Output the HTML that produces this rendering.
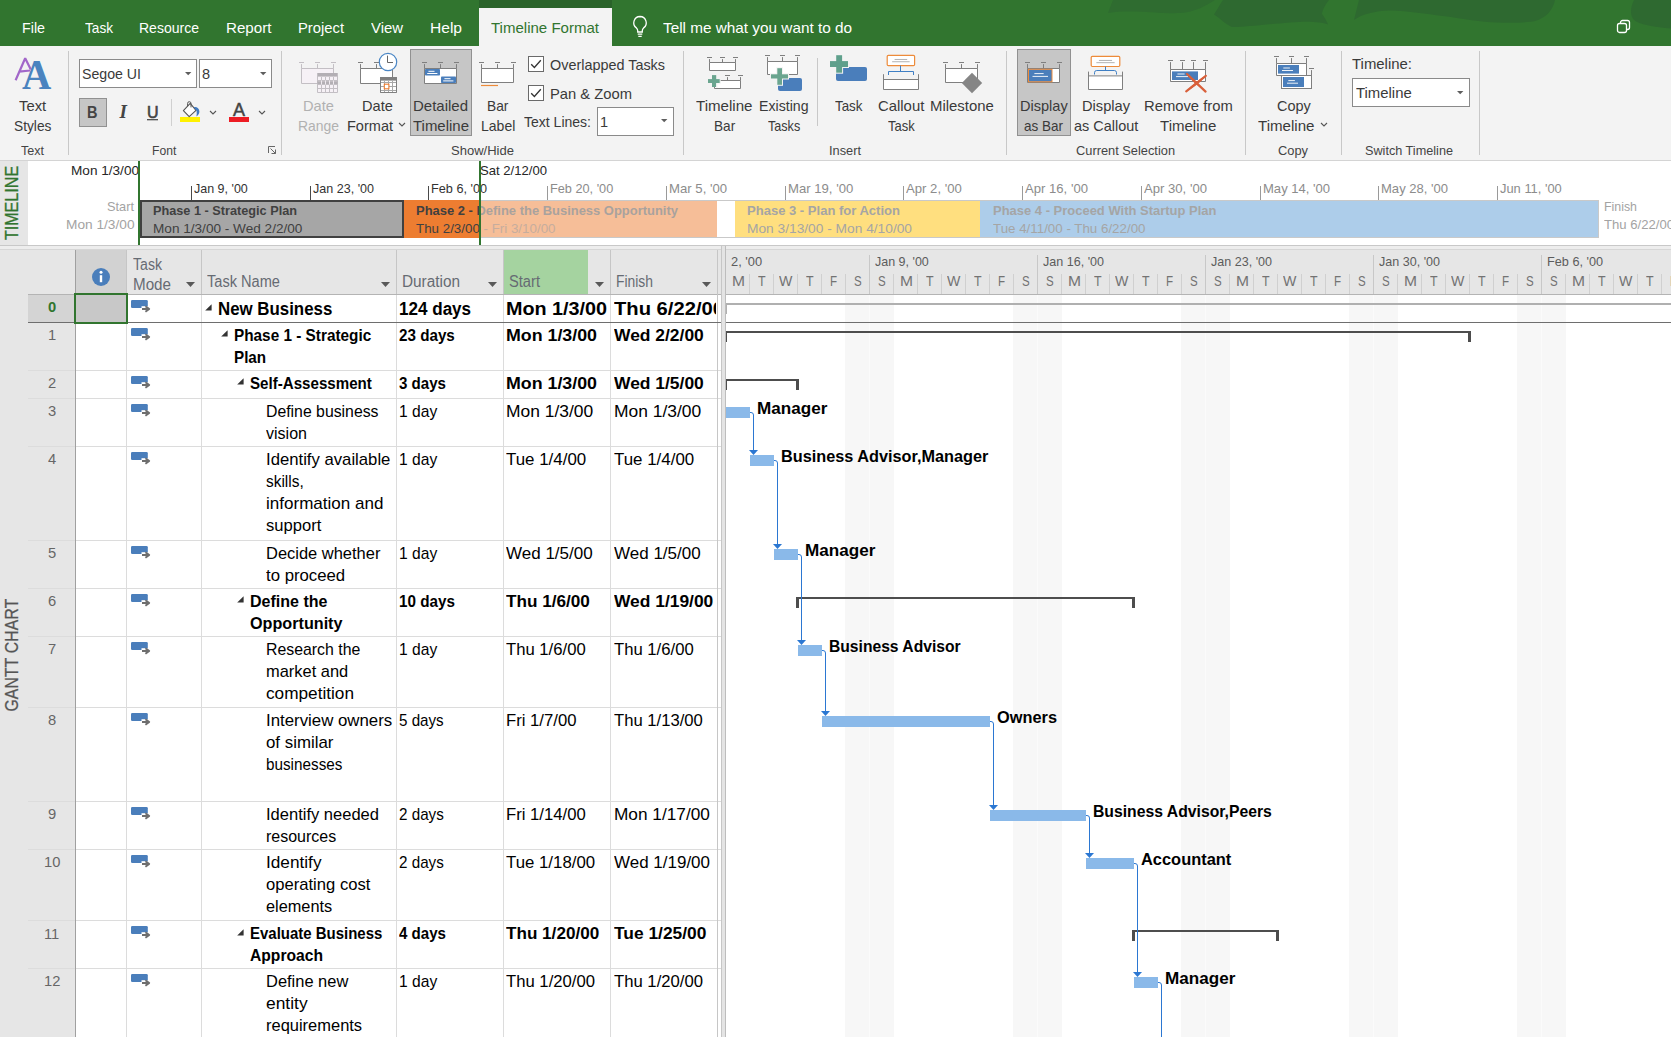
<!DOCTYPE html>
<html lang="en"><head><meta charset="utf-8"><title>Project - Timeline Format</title>
<style>
html,body{margin:0;padding:0;}
body{width:1671px;height:1037px;overflow:hidden;position:relative;background:#fff;font-family:"Liberation Sans", sans-serif;}
.b{position:absolute;display:block;}
.t{position:absolute;white-space:pre;transform-origin:0 50%;}
.rot{position:absolute;left:50%;top:50%;white-space:pre;line-height:1;transform:translate(-50%,-50%) rotate(-90deg);}
</style></head>
<body>
<div class="b " style="left:0px;top:0px;width:1671px;height:46px;background:#31752f;"></div>
<svg class="b" style="left:1100px;top:0px;" width="571" height="46" viewBox="1100 0 571 46">
<path d="M1108 13L1113 0L1215 0C1205 6 1195 12 1180 13C1160 14 1130 9 1108 13Z" fill="#2f6c30"/>
<path d="M1214 14.5C1218 8 1221 3 1223 0L1329 0C1324 6 1322 12 1322 14C1325 18 1327 22 1328 24.5C1320 22 1310 21 1290 22.5C1260 25 1240 27.5 1232 27C1225 24 1220 18 1214 14.5Z" fill="#2e6930"/>
<path d="M1359 0L1354 20C1362 14 1375 11 1390 10.5C1410 11 1425 14 1443 16C1465 19 1480 22 1497 22.5C1515 23 1528 22.5 1535 21C1546 18 1553 10 1555 0Z" fill="#2e6930"/>
<path d="M1634 0C1630 8 1630 16 1634 20C1640 25 1655 27 1671 28.5L1671 0Z" fill="#2e6930"/>
</svg>
<div class="b " style="left:479px;top:0px;width:133px;height:8px;background:#2a632a;"></div>
<div class="b " style="left:479px;top:8px;width:133px;height:38px;background:#f3f3f3;"></div>
<span class="t" style="transform:scaleX(0.9515);margin-left:0.00px;top:19px;font-size:15px;line-height:17px;color:#ffffff;left:22px;">File</span>
<span class="t" style="transform:scaleX(0.9078);margin-left:0.00px;top:19px;font-size:15px;line-height:17px;color:#ffffff;left:85px;">Task</span>
<span class="t" style="transform:scaleX(0.9345);margin-left:0.00px;top:19px;font-size:15px;line-height:17px;color:#ffffff;left:139px;">Resource</span>
<span class="t" style="transform:scaleX(1.0104);margin-left:0.00px;top:19px;font-size:15px;line-height:17px;color:#ffffff;left:226px;">Report</span>
<span class="t" style="transform:scaleX(0.9853);margin-left:0.00px;top:19px;font-size:15px;line-height:17px;color:#ffffff;left:298px;">Project</span>
<span class="t" style="transform:scaleX(0.9922);margin-left:0.00px;top:19px;font-size:15px;line-height:17px;color:#ffffff;left:371px;">View</span>
<span class="t" style="transform:scaleX(1.0370);margin-left:0.00px;top:19px;font-size:15px;line-height:17px;color:#ffffff;left:430px;">Help</span>
<span class="t" style="transform:scaleX(1.0017);margin-left:0.00px;top:19px;font-size:15px;line-height:17px;color:#31752f;left:491px;">Timeline Format</span>
<span class="t" style="transform:scaleX(1.0210);margin-left:0.00px;top:19px;font-size:15px;line-height:17px;color:#ffffff;left:663px;">Tell me what you want to do</span>
<svg class="b" style="left:630px;top:14px;" width="20" height="26" viewBox="0 0 20 26"><path d="M10 2.5a6.3 6.3 0 0 0-3.6 11.4c.9.8 1.3 1.6 1.3 2.8v1.3h4.6v-1.3c0-1.2.4-2 1.3-2.8A6.3 6.3 0 0 0 10 2.5z" fill="none" stroke="#fff" stroke-width="1.3"/><path d="M7.7 20.2h4.6M8.3 22.4h3.4" stroke="#fff" stroke-width="1.3" fill="none"/></svg>
<svg class="b" style="left:1616px;top:19px;" width="16" height="16" viewBox="0 0 16 16"><rect x="1.5" y="4.5" width="9" height="9" rx="2" fill="none" stroke="#fff" stroke-width="1.3"/><path d="M4.5 4.5V3.5a2 2 0 0 1 2-2h5a2 2 0 0 1 2 2v5a2 2 0 0 1-2 2h-1" fill="none" stroke="#fff" stroke-width="1.3"/></svg>
<div class="b " style="left:0px;top:46px;width:1671px;height:114px;background:#f3f3f3;"></div>
<div class="b " style="left:68px;top:51px;width:1px;height:104px;background:#c8c8c8;"></div>
<div class="b " style="left:281px;top:51px;width:1px;height:104px;background:#c8c8c8;"></div>
<div class="b " style="left:683px;top:51px;width:1px;height:104px;background:#c8c8c8;"></div>
<div class="b " style="left:1006px;top:51px;width:1px;height:104px;background:#c8c8c8;"></div>
<div class="b " style="left:1245px;top:51px;width:1px;height:104px;background:#c8c8c8;"></div>
<div class="b " style="left:1341px;top:51px;width:1px;height:104px;background:#c8c8c8;"></div>
<div class="b " style="left:1479px;top:51px;width:1px;height:104px;background:#c8c8c8;"></div>
<div class="b " style="left:817px;top:58px;width:1px;height:68px;background:#c8c8c8;"></div>
<span class="t" style="transform:scaleX(0.9885);margin-left:-13.60px;top:97px;font-size:15px;line-height:17px;color:#3a3a3a;left:33px;">Text</span>
<span class="t" style="transform:scaleX(0.9153);margin-left:-18.70px;top:117px;font-size:15px;line-height:17px;color:#3a3a3a;left:33px;">Styles</span>
<span class="t" style="transform:scaleX(0.9430);margin-left:-11.50px;top:143px;font-size:13.3px;line-height:15px;color:#444444;left:32.4px;">Text</span>
<div class="b " style="left:79px;top:59px;width:118px;height:29px;background:#fff;border:1px solid #8a8a8a;box-sizing:border-box;"></div>
<span class="t" style="transform:scaleX(0.9433);margin-left:0.00px;top:65px;font-size:15px;line-height:17px;color:#3a3a3a;left:82px;">Segoe UI</span>
<div class="b " style="left:199px;top:59px;width:73px;height:29px;background:#fff;border:1px solid #8a8a8a;box-sizing:border-box;"></div>
<span class="t" style="transform:scaleX(0.9691);margin-left:0.00px;top:65px;font-size:15px;line-height:17px;color:#3a3a3a;left:202px;">8</span>
<svg class="b" style="left:184.8px;top:72.0px;" width="7" height="4" viewBox="0 0 7 4"><path d="M0 0h6.4L3.2 3.3z" fill="#5e5e5e"/></svg>
<svg class="b" style="left:259.8px;top:72.0px;" width="7" height="4" viewBox="0 0 7 4"><path d="M0 0h6.4L3.2 3.3z" fill="#5e5e5e"/></svg>
<div class="b " style="left:79px;top:98px;width:28px;height:29px;background:#c6c6c6;border:1px solid #919191;box-sizing:border-box;"></div>
<span class="t" style="transform:scaleX(0.8800);margin-left:-5.25px;top:103px;font-size:16.5px;line-height:18px;color:#444;font-weight:700;left:92.3px;">B</span>
<span class="t" style="transform:scaleX(1.0000);margin-left:-3.70px;top:101px;font-size:19px;line-height:21px;color:#444;font-style:italic;left:123.3px;font-family:'Liberation Serif',serif;font-weight:700;">I</span>
<span class="t" style="transform:scaleX(0.9800);margin-left:-5.77px;top:103px;font-size:16.3px;line-height:18px;color:#444;left:152.6px;-webkit-text-stroke:0.6px #444;">U</span>
<div class="b " style="left:147px;top:119px;width:11px;height:1px;background:#555;"></div>
<div class="b " style="left:147px;top:120px;width:11px;height:1px;background:#bdbdbd;"></div>
<div class="b " style="left:171px;top:99px;width:1px;height:27px;background:#d0d0d0;"></div>
<div class="b " style="left:180px;top:117px;width:20px;height:5px;background:#fff100;"></div>
<svg class="b" style="left:209px;top:110px;" width="8" height="5" viewBox="0 0 8 5"><path d="M1 1l3 3 3-3" fill="none" stroke="#555" stroke-width="1.1"/></svg>
<span class="t" style="transform:scaleX(1.0000);margin-left:-6.01px;top:100px;font-size:18px;line-height:20px;color:#444;left:238.9px;-webkit-text-stroke:0.5px #444;">A</span>
<div class="b " style="left:229px;top:117px;width:20px;height:5px;background:#ed1c24;"></div>
<svg class="b" style="left:258px;top:110px;" width="8" height="5" viewBox="0 0 8 5"><path d="M1 1l3 3 3-3" fill="none" stroke="#555" stroke-width="1.1"/></svg>
<span class="t" style="transform:scaleX(0.9132);margin-left:-12.15px;top:143px;font-size:13.3px;line-height:15px;color:#444444;left:164.3px;">Font</span>
<svg class="b" style="left:267px;top:145px;" width="10" height="10" viewBox="0 0 10 10"><path d="M1.5 8V1.5H8" fill="none" stroke="#666" stroke-width="1"/><path d="M3.5 3.5l5 5M8.5 4.5v4h-4" fill="none" stroke="#666" stroke-width="1"/></svg>
<span class="t" style="transform:scaleX(0.9751);margin-left:-15.45px;top:97px;font-size:15px;line-height:17px;color:#b1b1b1;left:318.2px;">Date</span>
<span class="t" style="transform:scaleX(0.9275);margin-left:-20.50px;top:117px;font-size:15px;line-height:17px;color:#b1b1b1;left:318.2px;">Range</span>
<span class="t" style="transform:scaleX(0.9720);margin-left:-15.40px;top:97px;font-size:15px;line-height:17px;color:#3a3a3a;left:377.2px;">Date</span>
<span class="t" style="transform:scaleX(0.9681);margin-left:0.00px;top:117px;font-size:15px;line-height:17px;color:#3a3a3a;left:346.7px;">Format</span>
<svg class="b" style="left:398px;top:122.3px;" width="8" height="5" viewBox="0 0 8 5"><path d="M1 1l3 3 3-3" fill="none" stroke="#555" stroke-width="1.1"/></svg>
<div class="b " style="left:410px;top:49px;width:62px;height:87px;background:#c6c6c6;border:1px solid #919191;box-sizing:border-box;"></div>
<span class="t" style="transform:scaleX(0.9991);margin-left:-27.50px;top:97px;font-size:15px;line-height:17px;color:#3a3a3a;left:440.5px;">Detailed</span>
<span class="t" style="transform:scaleX(0.9975);margin-left:-28.00px;top:117px;font-size:15px;line-height:17px;color:#3a3a3a;left:440.5px;">Timeline</span>
<span class="t" style="transform:scaleX(0.9167);margin-left:-10.70px;top:97px;font-size:15px;line-height:17px;color:#3a3a3a;left:498px;">Bar</span>
<span class="t" style="transform:scaleX(0.9345);margin-left:-17.15px;top:117px;font-size:15px;line-height:17px;color:#3a3a3a;left:498px;">Label</span>
<div class="b " style="left:528px;top:56px;width:16px;height:16px;background:#fff;border:1px solid #6a6a6a;box-sizing:border-box;"></div>
<svg class="b" style="left:530px;top:59px;" width="12" height="10" viewBox="0 0 12 10"><path d="M1.2 5.2l3.2 3.3 6.4-7.2" fill="none" stroke="#333" stroke-width="1.3"/></svg>
<span class="t" style="transform:scaleX(0.9600);margin-left:0.00px;top:56px;font-size:15px;line-height:17px;color:#3a3a3a;left:550px;">Overlapped Tasks</span>
<div class="b " style="left:528px;top:85px;width:16px;height:16px;background:#fff;border:1px solid #6a6a6a;box-sizing:border-box;"></div>
<svg class="b" style="left:530px;top:88px;" width="12" height="10" viewBox="0 0 12 10"><path d="M1.2 5.2l3.2 3.3 6.4-7.2" fill="none" stroke="#333" stroke-width="1.3"/></svg>
<span class="t" style="transform:scaleX(0.9835);margin-left:0.00px;top:85px;font-size:15px;line-height:17px;color:#3a3a3a;left:550px;">Pan &amp; Zoom</span>
<span class="t" style="transform:scaleX(0.9342);margin-left:0.00px;top:113px;font-size:15px;line-height:17px;color:#3a3a3a;left:524px;">Text Lines:</span>
<div class="b " style="left:597px;top:107px;width:77px;height:29px;background:#fff;border:1px solid #8a8a8a;box-sizing:border-box;"></div>
<span class="t" style="transform:scaleX(0.9691);margin-left:0.00px;top:113px;font-size:15px;line-height:17px;color:#3a3a3a;left:600px;">1</span>
<svg class="b" style="left:661.3px;top:119.3px;" width="7" height="4" viewBox="0 0 7 4"><path d="M0 0h6.4L3.2 3.3z" fill="#5e5e5e"/></svg>
<span class="t" style="transform:scaleX(0.9796);margin-left:-31.50px;top:143px;font-size:13.3px;line-height:15px;color:#444444;left:482px;">Show/Hide</span>
<span class="t" style="transform:scaleX(1.0064);margin-left:-28.25px;top:97px;font-size:15px;line-height:17px;color:#3a3a3a;left:724.5px;">Timeline</span>
<span class="t" style="transform:scaleX(0.9082);margin-left:-10.60px;top:117px;font-size:15px;line-height:17px;color:#3a3a3a;left:724.5px;">Bar</span>
<span class="t" style="transform:scaleX(0.9423);margin-left:-24.75px;top:97px;font-size:15px;line-height:17px;color:#3a3a3a;left:783.6px;">Existing</span>
<span class="t" style="transform:scaleX(0.8398);margin-left:-16.10px;top:117px;font-size:15px;line-height:17px;color:#3a3a3a;left:783.6px;">Tasks</span>
<span class="t" style="transform:scaleX(0.8916);margin-left:-13.75px;top:97px;font-size:15px;line-height:17px;color:#3a3a3a;left:848.8px;">Task</span>
<span class="t" style="transform:scaleX(0.9914);margin-left:-23.15px;top:97px;font-size:15px;line-height:17px;color:#3a3a3a;left:901px;">Callout</span>
<span class="t" style="transform:scaleX(0.8657);margin-left:-13.35px;top:117px;font-size:15px;line-height:17px;color:#3a3a3a;left:901px;">Task</span>
<span class="t" style="transform:scaleX(0.9937);margin-left:-31.90px;top:97px;font-size:15px;line-height:17px;color:#3a3a3a;left:961.5px;">Milestone</span>
<span class="t" style="transform:scaleX(0.9620);margin-left:-16.00px;top:143px;font-size:13.3px;line-height:15px;color:#444444;left:845px;">Insert</span>
<div class="b " style="left:1017px;top:49px;width:54px;height:87px;background:#c6c6c6;border:1px solid #919191;box-sizing:border-box;"></div>
<span class="t" style="transform:scaleX(0.9698);margin-left:-23.85px;top:97px;font-size:15px;line-height:17px;color:#3a3a3a;left:1043.9px;">Display</span>
<span class="t" style="transform:scaleX(0.8995);margin-left:-19.50px;top:117px;font-size:15px;line-height:17px;color:#3a3a3a;left:1043.9px;">as Bar</span>
<span class="t" style="transform:scaleX(0.9759);margin-left:-24.00px;top:97px;font-size:15px;line-height:17px;color:#3a3a3a;left:1105.6px;">Display</span>
<span class="t" style="transform:scaleX(0.9625);margin-left:-32.10px;top:117px;font-size:15px;line-height:17px;color:#3a3a3a;left:1105.6px;">as Callout</span>
<span class="t" style="transform:scaleX(0.9852);margin-left:-44.35px;top:97px;font-size:15px;line-height:17px;color:#3a3a3a;left:1188.3px;">Remove from</span>
<span class="t" style="transform:scaleX(1.0028);margin-left:-28.15px;top:117px;font-size:15px;line-height:17px;color:#3a3a3a;left:1188.3px;">Timeline</span>
<span class="t" style="transform:scaleX(0.9637);margin-left:-49.50px;top:143px;font-size:13.3px;line-height:15px;color:#444444;left:1125px;">Current Selection</span>
<span class="t" style="transform:scaleX(0.9649);margin-left:-16.90px;top:97px;font-size:15px;line-height:17px;color:#3a3a3a;left:1294px;">Copy</span>
<span class="t" style="transform:scaleX(1.0064);margin-left:0.00px;top:117px;font-size:15px;line-height:17px;color:#3a3a3a;left:1258.3px;">Timeline</span>
<svg class="b" style="left:1320px;top:122.3px;" width="8" height="5" viewBox="0 0 8 5"><path d="M1 1l3 3 3-3" fill="none" stroke="#555" stroke-width="1.1"/></svg>
<span class="t" style="transform:scaleX(0.9663);margin-left:-15.00px;top:143px;font-size:13.3px;line-height:15px;color:#444444;left:1293px;">Copy</span>
<span class="t" style="transform:scaleX(0.9951);margin-left:0.00px;top:55px;font-size:15px;line-height:17px;color:#3a3a3a;left:1352px;">Timeline:</span>
<div class="b " style="left:1352px;top:78px;width:118px;height:29px;background:#fff;border:1px solid #8a8a8a;box-sizing:border-box;"></div>
<span class="t" style="transform:scaleX(0.9922);margin-left:0.00px;top:84px;font-size:15px;line-height:17px;color:#3a3a3a;left:1355.6px;">Timeline</span>
<svg class="b" style="left:1457.3px;top:90.8px;" width="7" height="4" viewBox="0 0 7 4"><path d="M0 0h6.4L3.2 3.3z" fill="#5e5e5e"/></svg>
<span class="t" style="transform:scaleX(0.9526);margin-left:-44.00px;top:143px;font-size:13.3px;line-height:15px;color:#444444;left:1409px;">Switch Timeline</span>
<svg class="b" style="left:0px;top:46px;" width="1671" height="114" viewBox="0 46 1671 114"><path d="M15.6 80.2L25.2 58.2L30.8 69.6M19.3 71.6L30 70.5" stroke="#a267c9" stroke-width="2.2" fill="none" stroke-linejoin="bevel"/><path d="M183.4 110.6L190.2 103.4L196 110.4L189.2 116.6Z" stroke="#555" stroke-width="1.1" fill="#fff" stroke-linejoin="round"/><path d="M187.6 106.2V103.4a1.7 1.7 0 0 1 3.4 0V107.4" stroke="#555" stroke-width="1" fill="none" /><path d="M193.8 107.2C196.5 106.4 199.4 108.4 199.4 111.6C199.4 113.6 198.2 115.4 196.4 116.6C196.8 114.8 196.9 112.8 196.6 111Z" stroke="none" stroke-width="0" fill="#3f7ac2" /><rect x="301.5" y="68.5" width="32.0" height="15.0" fill="#f6f1f6" stroke="none" stroke-width="1" rx="0"/><path d="M299.0 62.5h5M301.5 64.1V68.5M315.0 62.5h5M317.5 64.1V68.5M331.0 62.5h5M333.5 64.1V68.5M301.5 68.5H333.5M301.5 68.5V83.5H333.5V68.5" stroke="#c3bfc4" stroke-width="1" fill="none" /><rect x="317" y="73" width="21" height="20" fill="#f6f1f6" stroke="none" stroke-width="1" rx="0"/><rect x="317" y="73" width="21" height="3.6" fill="#b3afb4" stroke="none" stroke-width="1" rx="0"/><path d="M317.5 73V92.5H337.5V73M321.5 77V92.5M325.5 77V92.5M329.5 77V92.5M333.5 77V92.5M317.5 80.5H337.5M317.5 84.5H337.5M317.5 88.5H337.5" stroke="#c3bfc4" stroke-width="1" fill="none" /><rect x="317.5" y="81.2" width="20" height="2.8" fill="#b3afb4" stroke="none" stroke-width="1" rx="0"/><path d="M321.5 80.5v4M325.5 80.5v4M329.5 80.5v4M333.5 80.5v4" stroke="#f6f1f6" stroke-width="0.9" fill="none" /><rect x="360.5" y="68.5" width="32.0" height="15.0" fill="#fff" stroke="none" stroke-width="1" rx="0"/><path d="M358.0 62.5h5M360.5 64.1V68.5M374.0 62.5h5M376.5 64.1V68.5M390.0 62.5h5M392.5 64.1V68.5M360.5 68.5H392.5M360.5 68.5V83.5H392.5V68.5" stroke="#7f7f7f" stroke-width="1" fill="none" /><circle cx="388" cy="62" r="8.7" fill="#fff" stroke="#4a86c5" stroke-width="1.2"/><path d="M387.5 55.6V62.5H393" stroke="#666" stroke-width="1" fill="none" /><rect x="380" y="77" width="17" height="16" fill="#fff" stroke="none" stroke-width="1" rx="0"/><rect x="380" y="77" width="17" height="3.6" fill="#7f7f7f" stroke="none" stroke-width="1" rx="0"/><path d="M380.5 77V92.5H396.5V77M384.5 81V92.5M388.5 81V92.5M392.5 81V92.5M380.5 82.5H396.5M380.5 86.5H396.5M380.5 90.5H396.5" stroke="#a8a8a8" stroke-width="1" fill="none" /><path d="M380.5 77V92.5H396.5V77" stroke="#7f7f7f" stroke-width="1" fill="none" /><rect x="384.3" y="84.2" width="4.6" height="4.6" fill="#fff" stroke="#ed7d31" stroke-width="1.1" rx="0"/><rect x="424.5" y="68.5" width="32.0" height="15.0" fill="#fff" stroke="none" stroke-width="1" rx="0"/><path d="M422.0 62.5h5M424.5 64.1V68.5M438.0 62.5h5M440.5 64.1V68.5M454.0 62.5h5M456.5 64.1V68.5M424.5 68.5H456.5M424.5 68.5V83.5H456.5V68.5" stroke="#7f7f7f" stroke-width="1" fill="none" /><rect x="425" y="69" width="15" height="6.6" fill="#4a7ebb" stroke="none" stroke-width="1" rx="0.8"/><path d="M428.424 71.3h6.119999999999999M427.2 73.5h10.2" stroke="#fff" stroke-width="1" fill="none" /><rect x="441" y="76.4" width="15" height="6.6" fill="#4a7ebb" stroke="none" stroke-width="1" rx="0.8"/><path d="M444.424 78.7h6.119999999999999M443.2 80.9h10.2" stroke="#fff" stroke-width="1" fill="none" /><rect x="481.5" y="68.5" width="32.0" height="14.0" fill="#fff" stroke="none" stroke-width="1" rx="0"/><path d="M479.0 62.5h5M481.5 64.1V68.5M495.0 62.5h5M497.5 64.1V68.5M511.0 62.5h5M513.5 64.1V68.5M481.5 68.5H513.5M481.5 68.5V82.5H513.5V68.5" stroke="#7f7f7f" stroke-width="1" fill="none" /><path d="M481 85.5H498" stroke="#ed8b3a" stroke-width="1.2" fill="none" /><rect x="709.5" y="62.5" width="26.0" height="8.0" fill="#fff" stroke="none" stroke-width="1" rx="0"/><path d="M707.0 57.5h5M709.5 59.1V62.5M720.0 57.5h5M722.5 59.1V62.5M733.0 57.5h5M735.5 59.1V62.5M709.5 62.5H735.5M709.5 62.5V70.5H735.5V62.5" stroke="#7f7f7f" stroke-width="1" fill="none" /><rect x="714.5" y="80.5" width="26.0" height="8.0" fill="#fff" stroke="none" stroke-width="1" rx="0"/><path d="M725.0 75.5h5M727.5 77.1V80.5M738.0 75.5h5M740.5 77.1V80.5M714.5 80.5H740.5M714.5 80.5V88.5H740.5V80.5" stroke="#7f7f7f" stroke-width="1" fill="none" /><rect x="708" y="79.1" width="12.2" height="3.9" fill="#6aa58f" stroke="none" stroke-width="1" rx="0"/><rect x="712" y="75.1" width="4.2" height="11.9" fill="#6aa58f" stroke="none" stroke-width="1" rx="0"/><path d="M720.2 78.2v5.6h-3.2v4" stroke="#f3f3f3" stroke-width="1" fill="none" /><rect x="767.5" y="61.5" width="30.0" height="13.0" fill="#fff" stroke="none" stroke-width="1" rx="0"/><path d="M765.0 55.5h5M767.5 57.1V61.5M780.0 55.5h5M782.5 57.1V61.5M795.0 55.5h5M797.5 57.1V61.5M767.5 61.5H797.5M767.5 61.5V74.5H797.5V61.5" stroke="#7f7f7f" stroke-width="1" fill="none" /><rect x="778" y="78" width="24" height="13" fill="#4a7ebb" stroke="none" stroke-width="1" rx="2"/><rect x="770" y="73.3" width="19" height="6.2" fill="#f3f3f3" stroke="none" stroke-width="1" rx="0"/><rect x="776.3" y="67.2" width="6.7" height="18.6" fill="#f3f3f3" stroke="none" stroke-width="1" rx="0"/><rect x="771" y="74.3" width="17" height="4.2" fill="#6aa58f" stroke="none" stroke-width="1" rx="0"/><rect x="777.3" y="68.2" width="4.7" height="16.6" fill="#6aa58f" stroke="none" stroke-width="1" rx="0"/><rect x="836" y="67" width="31" height="14" fill="#4a7ebb" stroke="none" stroke-width="1" rx="2"/><rect x="829" y="60.1" width="20" height="7.9" fill="#f3f3f3" stroke="none" stroke-width="1" rx="0"/><rect x="835.2" y="54.2" width="7.9" height="19.5" fill="#f3f3f3" stroke="none" stroke-width="1" rx="0"/><rect x="830" y="61.1" width="18" height="5.9" fill="#5fa08c" stroke="none" stroke-width="1" rx="0"/><rect x="836.2" y="55.2" width="5.9" height="17.5" fill="#5fa08c" stroke="none" stroke-width="1" rx="0"/><rect x="883.5" y="79.5" width="35.0" height="10.0" fill="#fff" stroke="none" stroke-width="1" rx="0"/><path d="M883.5 74.2V89.5H918.5V74.2M883.5 79.5H918.5" stroke="#7f7f7f" stroke-width="1" fill="none" /><rect x="887.2" y="55.4" width="27.399999999999977" height="10.199999999999996" fill="#fff" stroke="#ed8b3a" stroke-width="1.2" rx="1.2"/><path d="M894.5980000000001 59.48h12.60399999999999M892.1320000000001 61.724h17.535999999999987" stroke="#a0a0a0" stroke-width="0.8" fill="none" /><path d="M900.5 65.6V71.5M888.5 75V71.5H913.5V75" stroke="#3f7fc4" stroke-width="1" fill="none" /><rect x="945.5" y="68.5" width="32.0" height="14.0" fill="#fff" stroke="none" stroke-width="1" rx="0"/><path d="M943.0 62.5h5M945.5 64.1V68.5M959.0 62.5h5M961.5 64.1V68.5M975.0 62.5h5M977.5 64.1V68.5M945.5 68.5H977.5M945.5 68.5V82.5H977.5V68.5" stroke="#7f7f7f" stroke-width="1" fill="none" /><path d="M972 72.8L982.2 83L972 93.2L961.8 83Z" stroke="none" stroke-width="0" fill="#858585" /><rect x="1027.5" y="68.5" width="32.0" height="14.0" fill="#fff" stroke="none" stroke-width="1" rx="0"/><path d="M1025.0 62.5h5M1027.5 64.1V68.5M1041.0 62.5h5M1043.5 64.1V68.5M1057.0 62.5h5M1059.5 64.1V68.5M1027.5 68.5H1059.5M1027.5 68.5V82.5H1059.5V68.5" stroke="#7f7f7f" stroke-width="1" fill="none" /><rect x="1028.5" y="69.3" width="23.5" height="12.5" fill="#4a7ebb" stroke="#ed8b3a" stroke-width="1" rx="0"/><path d="M1034.36 73.6h9.299999999999999M1032.5 76.39999999999999h15.5" stroke="#fff" stroke-width="0.9" fill="none" /><rect x="1088.5" y="75.9" width="34.0" height="13.599999999999994" fill="#fff" stroke="none" stroke-width="1" rx="0"/><path d="M1088.5 71.6V89.5H1122.5V71.6M1088.5 75.9H1122.5" stroke="#7f7f7f" stroke-width="1" fill="none" /><rect x="1091.2" y="56.4" width="28.59999999999991" height="10.100000000000001" fill="#fff" stroke="#ed8b3a" stroke-width="1.2" rx="1.2"/><path d="M1098.922 60.44h13.155999999999958M1096.348 62.662h18.30399999999994" stroke="#a0a0a0" stroke-width="0.8" fill="none" /><path d="M1105.5 66.5V70.5M1094.5 74.5V72.7q0 -2.2 2.2 -2.2H1114.3q2.2 0 2.2 2.2V74.5" stroke="#3f7fc4" stroke-width="1" fill="none" /><rect x="1170.5" y="69.5" width="35.0" height="12.0" fill="#fff" stroke="none" stroke-width="1" rx="0"/><path d="M1168.0 60.5h5M1170.5 62.1V69.5M1180.0 60.5h5M1182.5 62.1V69.5M1191.0 60.5h5M1193.5 62.1V69.5M1203.0 60.5h5M1205.5 62.1V69.5M1170.5 69.5H1205.5M1170.5 69.5V81.5H1205.5V69.5" stroke="#7f7f7f" stroke-width="1" fill="none" /><rect x="1172" y="71.4" width="26" height="8.6" fill="#4a7ebb" stroke="none" stroke-width="1" rx="0"/><path d="M1177.44 74h7.199999999999999M1176 76.6h12" stroke="#fff" stroke-width="0.9" fill="none" /><path d="M1186.2 73.4c6 3.5 13 10.5 19.8 18.4c-7.8-5.4-14.6-11-19.8-18.4z" stroke="none" stroke-width="0" fill="#d9603b" /><path d="M1206.4 75.2c-6.5 3.5-14.5 9.7-20.8 16.6c7.8-4.2 15.8-10 20.8-16.6z" stroke="none" stroke-width="0" fill="#d9603b" /><path d="M1187 74L1205.6 91.6M1205.8 75.8L1186.2 91.4" stroke="#d9603b" stroke-width="2.2" fill="none" stroke-linecap="round"/><rect x="1276.5" y="63.5" width="30.0" height="12.0" fill="#fff" stroke="none" stroke-width="1" rx="0"/><path d="M1274.0 56.5h5M1276.5 58.1V63.5M1289.0 56.5h5M1291.5 58.1V63.5M1304.0 56.5h5M1306.5 58.1V63.5M1276.5 63.5H1306.5M1276.5 63.5V75.5H1306.5V63.5" stroke="#7f7f7f" stroke-width="1" fill="none" /><rect x="1278" y="65" width="21" height="8.6" fill="#4a7ebb" stroke="none" stroke-width="1" rx="0"/><path d="M1283.32 68h6.6M1282 70.5h11" stroke="#fff" stroke-width="0.9" fill="none" /><path d="M1309 68.5h5M1311.5 70.1V76" stroke="#7f7f7f" stroke-width="1" fill="none" /><rect x="1281.5" y="75.5" width="30" height="13" fill="#fff" stroke="#7f7f7f" stroke-width="1" rx="0"/><rect x="1283" y="77" width="21" height="10" fill="#4a7ebb" stroke="none" stroke-width="1" rx="0"/><path d="M1288.32 80.6h6.6M1287 83.19999999999999h11" stroke="#fff" stroke-width="0.9" fill="none" /></svg>
<span class="t" style="transform:scaleX(0.9650);margin-left:0.00px;top:52px;font-size:42px;line-height:47px;color:#4a83bf;font-weight:700;left:22px;font-family:'Liberation Serif',serif;">A</span>
<div class="b " style="left:0px;top:160px;width:1671px;height:1px;background:#d4d4d4;"></div>
<div class="b " style="left:0px;top:161px;width:1671px;height:84px;background:#ffffff;"></div>
<div class="b " style="left:0px;top:161px;width:28px;height:84px;background:#e6e6e6;"></div>
<div class="b " style="left:0px;top:245px;width:1671px;height:5px;background:#ededed;"></div>
<div class="b " style="left:0px;top:245px;width:1671px;height:1px;background:#c8c8c8;"></div>
<div class="b " style="left:0px;top:249px;width:1671px;height:1px;background:#d6d6d6;"></div>
<div class="b" style="left:0;top:161px;width:28px;height:84px;"><span class="rot" style="left:13.3px;font-size:17.6px;color:#31752f;-webkit-text-stroke:0.3px #31752f;transform:translate(-50%,-50%) rotate(-90deg) scaleX(0.915);">TIMELINE</span></div>
<span class="t" style="transform:scaleX(1.0221);margin-left:-68.00px;top:163px;font-size:13.3px;line-height:15px;color:#262626;left:138.5px;">Mon 1/3/00</span>
<span class="t" style="transform:scaleX(0.9848);margin-left:0.00px;top:163px;font-size:13.3px;line-height:15px;color:#262626;left:480px;">Sat 2/12/00</span>
<span class="t" style="transform:scaleX(0.9611);margin-left:-27.00px;top:199px;font-size:13.3px;line-height:15px;color:#a3a3a3;left:134px;">Start</span>
<span class="t" style="transform:scaleX(1.0296);margin-left:-68.50px;top:217px;font-size:13.3px;line-height:15px;color:#a3a3a3;left:134px;">Mon 1/3/00</span>
<span class="t" style="transform:scaleX(0.9300);margin-left:0.00px;top:199px;font-size:13.3px;line-height:15px;color:#a3a3a3;left:1604px;">Finish</span>
<span class="t" style="transform:scaleX(0.9861);margin-left:0.00px;top:217px;font-size:13.3px;line-height:15px;color:#a3a3a3;left:1604px;">Thu 6/22/00</span>
<div class="b " style="left:191px;top:186px;width:1px;height:15px;background:#4a4a4a;"></div>
<span class="t" style="transform:scaleX(0.9400);margin-left:0.00px;top:181px;font-size:13.3px;line-height:15px;color:#333;left:194px;">Jan 9, '00</span>
<div class="b " style="left:310px;top:186px;width:1px;height:15px;background:#4a4a4a;"></div>
<span class="t" style="transform:scaleX(0.9435);margin-left:0.00px;top:181px;font-size:13.3px;line-height:15px;color:#333;left:313px;">Jan 23, '00</span>
<div class="b " style="left:428px;top:186px;width:1px;height:15px;background:#4a4a4a;"></div>
<span class="t" style="transform:scaleX(0.9541);margin-left:0.00px;top:181px;font-size:13.3px;line-height:15px;color:#333;left:431px;">Feb 6, '00</span>
<div class="b " style="left:547px;top:186px;width:1px;height:15px;background:#9a9a9a;"></div>
<span class="t" style="transform:scaleX(0.9559);margin-left:0.00px;top:181px;font-size:13.3px;line-height:15px;color:#8c8c8c;left:550px;">Feb 20, '00</span>
<div class="b " style="left:666px;top:186px;width:1px;height:15px;background:#9a9a9a;"></div>
<span class="t" style="transform:scaleX(0.9895);margin-left:0.00px;top:181px;font-size:13.3px;line-height:15px;color:#8c8c8c;left:669px;">Mar 5, '00</span>
<div class="b " style="left:785px;top:186px;width:1px;height:15px;background:#9a9a9a;"></div>
<span class="t" style="transform:scaleX(0.9873);margin-left:0.00px;top:181px;font-size:13.3px;line-height:15px;color:#8c8c8c;left:788px;">Mar 19, '00</span>
<div class="b " style="left:903px;top:186px;width:1px;height:15px;background:#9a9a9a;"></div>
<span class="t" style="transform:scaleX(0.9876);margin-left:0.00px;top:181px;font-size:13.3px;line-height:15px;color:#8c8c8c;left:906px;">Apr 2, '00</span>
<div class="b " style="left:1022px;top:186px;width:1px;height:15px;background:#9a9a9a;"></div>
<span class="t" style="transform:scaleX(0.9853);margin-left:0.00px;top:181px;font-size:13.3px;line-height:15px;color:#8c8c8c;left:1025px;">Apr 16, '00</span>
<div class="b " style="left:1141px;top:186px;width:1px;height:15px;background:#9a9a9a;"></div>
<span class="t" style="transform:scaleX(0.9853);margin-left:0.00px;top:181px;font-size:13.3px;line-height:15px;color:#8c8c8c;left:1144px;">Apr 30, '00</span>
<div class="b " style="left:1260px;top:186px;width:1px;height:15px;background:#9a9a9a;"></div>
<span class="t" style="transform:scaleX(0.9814);margin-left:0.00px;top:181px;font-size:13.3px;line-height:15px;color:#8c8c8c;left:1263px;">May 14, '00</span>
<div class="b " style="left:1378px;top:186px;width:1px;height:15px;background:#9a9a9a;"></div>
<span class="t" style="transform:scaleX(0.9814);margin-left:0.00px;top:181px;font-size:13.3px;line-height:15px;color:#8c8c8c;left:1381px;">May 28, '00</span>
<div class="b " style="left:1497px;top:186px;width:1px;height:15px;background:#9a9a9a;"></div>
<span class="t" style="transform:scaleX(0.9701);margin-left:0.00px;top:181px;font-size:13.3px;line-height:15px;color:#8c8c8c;left:1500px;">Jun 11, '00</span>
<div class="b " style="left:140px;top:200px;width:264px;height:38px;background:#a6a6a6;border:2px solid #404040;box-sizing:border-box;"></div>
<div class="b " style="left:403px;top:200px;width:77px;height:38px;background:#ed7d31;"></div>
<div class="b " style="left:403px;top:200px;width:1px;height:38px;background:#404040;"></div>
<div class="b " style="left:480px;top:201px;width:237px;height:36px;background:#f6be98;"></div>
<div class="b " style="left:735px;top:201px;width:245px;height:36px;background:#ffdf7f;"></div>
<div class="b " style="left:980px;top:201px;width:618px;height:36px;background:#adcdea;"></div>
<div class="b " style="left:480px;top:200px;width:1118px;height:1px;background:#c9c9c9;"></div>
<div class="b " style="left:480px;top:237px;width:1118px;height:1px;background:#c9c9c9;"></div>
<div class="b " style="left:1598px;top:200px;width:1px;height:38px;background:#c9c9c9;"></div>
<div class="b " style="left:717px;top:201px;width:18px;height:36px;background:#ffffff;"></div>
<span class="t" style="transform:scaleX(0.9551);margin-left:0.00px;top:203px;font-size:13.3px;line-height:15px;color:#404040;font-weight:700;left:152.8px;">Phase 1 - Strategic Plan</span>
<span class="t" style="transform:scaleX(1.0224);margin-left:0.00px;top:221px;font-size:13.3px;line-height:15px;color:#404040;left:152.8px;">Mon 1/3/00 - Wed 2/2/00</span>
<span class="t" style="transform:scaleX(0.9798);margin-left:0.00px;top:203px;font-size:13.3px;line-height:15px;color:#a5a5a5;font-weight:700;left:747px;">Phase 3 - Plan for Action</span>
<span class="t" style="transform:scaleX(1.0334);margin-left:0.00px;top:221px;font-size:13.3px;line-height:15px;color:#a5a5a5;left:747px;">Mon 3/13/00 - Mon 4/10/00</span>
<span class="t" style="transform:scaleX(0.9758);margin-left:0.00px;top:203px;font-size:13.3px;line-height:15px;color:#a5a5a5;font-weight:700;left:993px;">Phase 4 - Proceed With Startup Plan</span>
<span class="t" style="transform:scaleX(1.0030);margin-left:0.00px;top:221px;font-size:13.3px;line-height:15px;color:#a5a5a5;left:993px;">Tue 4/11/00 - Thu 6/22/00</span>
<div class="b" style="left:403px;top:200px;width:77px;height:38px;overflow:hidden;">
<span class="t" style="transform:scaleX(0.9741);margin-left:0.00px;top:3px;font-size:13.3px;line-height:15px;color:#404040;font-weight:700;left:13px;">Phase 2 - Define the Business Opportunity</span>
<span class="t" style="transform:scaleX(1.0038);margin-left:0.00px;top:21px;font-size:13.3px;line-height:15px;color:#404040;left:13px;">Thu 2/3/00 - Fri 3/10/00</span>
</div>
<div class="b" style="left:480px;top:200px;width:237px;height:38px;overflow:hidden;">
<span class="t" style="transform:scaleX(0.9741);margin-left:0.00px;top:3px;font-size:13.3px;line-height:15px;color:#a9a29e;font-weight:700;left:-64px;">Phase 2 - Define the Business Opportunity</span>
<span class="t" style="transform:scaleX(1.0038);margin-left:0.00px;top:21px;font-size:13.3px;line-height:15px;color:#c6ad9e;left:-64px;">Thu 2/3/00 - Fri 3/10/00</span>
</div>
<div class="b " style="left:138px;top:161px;width:2px;height:84px;background:#31752f;"></div>
<div class="b " style="left:479px;top:161px;width:2px;height:84px;background:#31752f;"></div>
<div class="b " style="left:0px;top:250px;width:1671px;height:787px;background:#ffffff;"></div>
<div class="b " style="left:0px;top:250px;width:28px;height:787px;background:#e6e6e6;"></div>
<div class="b" style="left:0;top:250px;width:28px;height:787px;"><span class="rot" style="left:12.6px;top:404.5px;font-size:17.7px;color:#555;-webkit-text-stroke:0.25px #555;letter-spacing:0.2px;transform:translate(-50%,-50%) rotate(-90deg) scaleX(0.888);">GANTT CHART</span></div>
<div class="b " style="left:28px;top:250px;width:698px;height:45px;background:#e6e6e6;"></div>
<div class="b " style="left:28px;top:295px;width:47px;height:742px;background:#e6e6e6;"></div>
<div class="b " style="left:75px;top:250px;width:52px;height:44px;background:#d2d2d2;"></div>
<div class="b " style="left:503px;top:250px;width:85px;height:44px;background:#a5d3a0;"></div>
<div class="b " style="left:28px;top:294px;width:693px;height:1px;background:#b4b4b4;"></div>
<div class="b " style="left:28px;top:370px;width:693px;height:1px;background:#dcdcdc;"></div>
<div class="b " style="left:28px;top:398px;width:693px;height:1px;background:#dcdcdc;"></div>
<div class="b " style="left:28px;top:446px;width:693px;height:1px;background:#dcdcdc;"></div>
<div class="b " style="left:28px;top:540px;width:693px;height:1px;background:#dcdcdc;"></div>
<div class="b " style="left:28px;top:588px;width:693px;height:1px;background:#dcdcdc;"></div>
<div class="b " style="left:28px;top:636px;width:693px;height:1px;background:#dcdcdc;"></div>
<div class="b " style="left:28px;top:707px;width:693px;height:1px;background:#dcdcdc;"></div>
<div class="b " style="left:28px;top:801px;width:693px;height:1px;background:#dcdcdc;"></div>
<div class="b " style="left:28px;top:849px;width:693px;height:1px;background:#dcdcdc;"></div>
<div class="b " style="left:28px;top:920px;width:693px;height:1px;background:#dcdcdc;"></div>
<div class="b " style="left:28px;top:968px;width:693px;height:1px;background:#dcdcdc;"></div>
<div class="b " style="left:75px;top:250px;width:1px;height:787px;background:#a0a0a0;"></div>
<div class="b " style="left:126px;top:250px;width:1px;height:44px;background:#c6c6c6;"></div>
<div class="b " style="left:126px;top:295px;width:1px;height:742px;background:#dcdcdc;"></div>
<div class="b " style="left:201px;top:250px;width:1px;height:44px;background:#c6c6c6;"></div>
<div class="b " style="left:201px;top:295px;width:1px;height:742px;background:#dcdcdc;"></div>
<div class="b " style="left:396px;top:250px;width:1px;height:44px;background:#c6c6c6;"></div>
<div class="b " style="left:396px;top:295px;width:1px;height:742px;background:#dcdcdc;"></div>
<div class="b " style="left:503px;top:250px;width:1px;height:44px;background:#c6c6c6;"></div>
<div class="b " style="left:503px;top:295px;width:1px;height:742px;background:#dcdcdc;"></div>
<div class="b " style="left:610px;top:250px;width:1px;height:44px;background:#c6c6c6;"></div>
<div class="b " style="left:610px;top:295px;width:1px;height:742px;background:#dcdcdc;"></div>
<div class="b " style="left:717px;top:250px;width:1px;height:787px;background:#c6c6c6;"></div>
<div class="b " style="left:721px;top:246px;width:5px;height:791px;background:#e4e4e4;"></div>
<div class="b " style="left:721px;top:246px;width:1px;height:791px;background:#c6c6c6;"></div>
<div class="b " style="left:725px;top:246px;width:1px;height:791px;background:#bdbdbd;"></div>
<div class="b " style="left:28px;top:295px;width:47px;height:27px;background:#d4d4d4;"></div>
<div class="b " style="left:28px;top:322px;width:693px;height:1px;background:#6e6e6e;"></div>
<div class="b " style="left:76px;top:295px;width:50px;height:27px;background:#c8c8c8;"></div>
<div class="b " style="left:74px;top:293px;width:54px;height:31px;border:2px solid #31752f;box-sizing:border-box;"></div>
<span class="t" style="transform:scaleX(0.8813);margin-left:0.00px;top:256px;font-size:16px;line-height:17px;color:#666b73;left:132.5px;">Task</span>
<span class="t" style="transform:scaleX(0.9493);margin-left:0.00px;top:276px;font-size:16px;line-height:17px;color:#666b73;left:132.5px;">Mode</span>
<span class="t" style="transform:scaleX(0.9121);margin-left:0.00px;top:273px;font-size:16px;line-height:17px;color:#666b73;left:207px;">Task Name</span>
<span class="t" style="transform:scaleX(0.9589);margin-left:0.00px;top:273px;font-size:16px;line-height:17px;color:#666b73;left:402px;">Duration</span>
<span class="t" style="transform:scaleX(0.9172);margin-left:0.00px;top:273px;font-size:16px;line-height:17px;color:#666b73;left:509px;">Start</span>
<span class="t" style="transform:scaleX(0.8668);margin-left:0.00px;top:273px;font-size:16px;line-height:17px;color:#666b73;left:616px;">Finish</span>
<svg class="b" style="left:185.5px;top:282px;" width="9" height="5" viewBox="0 0 9 5"><path d="M0 0h9L4.5 5z" fill="#595959"/></svg>
<svg class="b" style="left:380.5px;top:282px;" width="9" height="5" viewBox="0 0 9 5"><path d="M0 0h9L4.5 5z" fill="#595959"/></svg>
<svg class="b" style="left:487.5px;top:282px;" width="9" height="5" viewBox="0 0 9 5"><path d="M0 0h9L4.5 5z" fill="#595959"/></svg>
<svg class="b" style="left:594.5px;top:282px;" width="9" height="5" viewBox="0 0 9 5"><path d="M0 0h9L4.5 5z" fill="#595959"/></svg>
<svg class="b" style="left:701.5px;top:282px;" width="9" height="5" viewBox="0 0 9 5"><path d="M0 0h9L4.5 5z" fill="#595959"/></svg>
<svg class="b" style="left:91px;top:267px;" width="20" height="20" viewBox="0 0 20 20"><circle cx="10" cy="10" r="9" fill="#4a7ebb"/><rect x="8.8" y="8.2" width="2.4" height="7" fill="#fff"/><circle cx="10" cy="5.2" r="1.5" fill="#fff"/></svg>
<span class="t" style="transform:scaleX(0.9500);margin-left:-4.10px;top:298px;font-size:15.5px;line-height:17px;color:#31752f;font-weight:700;left:51.8px;">0</span>
<svg class="b" style="left:131px;top:300px;" width="20" height="13" viewBox="0 0 20 13"><rect x="0" y="0" width="16.8" height="8" rx="1.3" fill="#4a7ebb"/><path d="M10.5 6.2h6.2v3h-6.2z" fill="#fff"/><path d="M11 9h6" fill="none" stroke="#6e6e6e" stroke-width="2"/><path d="M14.4 6.2l3.8 2.8-3.8 2.8" fill="none" stroke="#6e6e6e" stroke-width="1.9" stroke-linejoin="round"/></svg>
<span class="t" style="transform:scaleX(0.9221);margin-left:0.00px;top:298px;font-size:18.3px;line-height:21px;color:#000;font-weight:700;left:218px;">New Business</span>
<svg class="b" style="left:205.2px;top:304.1px;" width="8" height="8" viewBox="0 0 8 8"><path d="M6.6 0.2v6.2h-6.4z" fill="#333"/></svg>
<span class="t" style="transform:scaleX(0.9333);margin-left:0.00px;top:298px;font-size:18.3px;line-height:21px;color:#000;font-weight:700;left:399px;">124 days</span>
<div class="b" style="left:504px;top:295px;width:106px;height:26px;overflow:hidden;">
<span class="t" style="transform:scaleX(1.0816);margin-left:0.00px;top:3px;font-size:18.3px;line-height:21px;color:#000;font-weight:700;left:2.4px;">Mon 1/3/00</span>
</div>
<div class="b" style="left:611px;top:295px;width:105px;height:26px;overflow:hidden;">
<span class="t" style="transform:scaleX(1.1047);margin-left:0.00px;top:3px;font-size:18.3px;line-height:21px;color:#000;font-weight:700;left:2.7px;">Thu 6/22/00</span>
</div>
<span class="t" style="transform:scaleX(0.9500);margin-left:-4.10px;top:326px;font-size:15.5px;line-height:17px;color:#666;left:51.8px;">1</span>
<svg class="b" style="left:131px;top:328px;" width="20" height="13" viewBox="0 0 20 13"><rect x="0" y="0" width="16.8" height="8" rx="1.3" fill="#4a7ebb"/><path d="M10.5 6.2h6.2v3h-6.2z" fill="#fff"/><path d="M11 9h6" fill="none" stroke="#6e6e6e" stroke-width="2"/><path d="M14.4 6.2l3.8 2.8-3.8 2.8" fill="none" stroke="#6e6e6e" stroke-width="1.9" stroke-linejoin="round"/></svg>
<span class="t" style="transform:scaleX(0.9239);margin-left:0.00px;top:326px;font-size:16.6px;line-height:19px;color:#000;font-weight:700;left:234px;">Phase 1 - Strategic</span>
<span class="t" style="transform:scaleX(0.9159);margin-left:0.00px;top:348px;font-size:16.6px;line-height:19px;color:#000;font-weight:700;left:234px;">Plan</span>
<svg class="b" style="left:221.2px;top:330.1px;" width="8" height="8" viewBox="0 0 8 8"><path d="M6.6 0.2v6.2h-6.4z" fill="#333"/></svg>
<span class="t" style="transform:scaleX(0.9164);margin-left:0.00px;top:326px;font-size:16.6px;line-height:19px;color:#000;font-weight:700;left:399px;">23 days</span>
<div class="b" style="left:504px;top:322px;width:106px;height:26px;overflow:hidden;">
<span class="t" style="transform:scaleX(1.0726);margin-left:0.00px;top:4px;font-size:16.6px;line-height:19px;color:#000;font-weight:700;left:2.4px;">Mon 1/3/00</span>
</div>
<div class="b" style="left:611px;top:322px;width:105px;height:26px;overflow:hidden;">
<span class="t" style="transform:scaleX(1.0505);margin-left:0.00px;top:4px;font-size:16.6px;line-height:19px;color:#000;font-weight:700;left:2.7px;">Wed 2/2/00</span>
</div>
<span class="t" style="transform:scaleX(0.9500);margin-left:-4.10px;top:374px;font-size:15.5px;line-height:17px;color:#666;left:51.8px;">2</span>
<svg class="b" style="left:131px;top:376px;" width="20" height="13" viewBox="0 0 20 13"><rect x="0" y="0" width="16.8" height="8" rx="1.3" fill="#4a7ebb"/><path d="M10.5 6.2h6.2v3h-6.2z" fill="#fff"/><path d="M11 9h6" fill="none" stroke="#6e6e6e" stroke-width="2"/><path d="M14.4 6.2l3.8 2.8-3.8 2.8" fill="none" stroke="#6e6e6e" stroke-width="1.9" stroke-linejoin="round"/></svg>
<span class="t" style="transform:scaleX(0.9115);margin-left:0.00px;top:374px;font-size:16.6px;line-height:19px;color:#000;font-weight:700;left:250px;">Self-Assessment</span>
<svg class="b" style="left:237.2px;top:378.1px;" width="8" height="8" viewBox="0 0 8 8"><path d="M6.6 0.2v6.2h-6.4z" fill="#333"/></svg>
<span class="t" style="transform:scaleX(0.9096);margin-left:0.00px;top:374px;font-size:16.6px;line-height:19px;color:#000;font-weight:700;left:399px;">3 days</span>
<div class="b" style="left:504px;top:370px;width:106px;height:26px;overflow:hidden;">
<span class="t" style="transform:scaleX(1.0726);margin-left:0.00px;top:4px;font-size:16.6px;line-height:19px;color:#000;font-weight:700;left:2.4px;">Mon 1/3/00</span>
</div>
<div class="b" style="left:611px;top:370px;width:105px;height:26px;overflow:hidden;">
<span class="t" style="transform:scaleX(1.0505);margin-left:0.00px;top:4px;font-size:16.6px;line-height:19px;color:#000;font-weight:700;left:2.7px;">Wed 1/5/00</span>
</div>
<span class="t" style="transform:scaleX(0.9500);margin-left:-4.10px;top:402px;font-size:15.5px;line-height:17px;color:#666;left:51.8px;">3</span>
<svg class="b" style="left:131px;top:404px;" width="20" height="13" viewBox="0 0 20 13"><rect x="0" y="0" width="16.8" height="8" rx="1.3" fill="#4a7ebb"/><path d="M10.5 6.2h6.2v3h-6.2z" fill="#fff"/><path d="M11 9h6" fill="none" stroke="#6e6e6e" stroke-width="2"/><path d="M14.4 6.2l3.8 2.8-3.8 2.8" fill="none" stroke="#6e6e6e" stroke-width="1.9" stroke-linejoin="round"/></svg>
<span class="t" style="transform:scaleX(0.9528);margin-left:0.00px;top:402px;font-size:16.6px;line-height:19px;color:#000;left:266px;">Define business</span>
<span class="t" style="transform:scaleX(0.9661);margin-left:0.00px;top:424px;font-size:16.6px;line-height:19px;color:#000;left:266px;">vision</span>
<span class="t" style="transform:scaleX(0.9410);margin-left:0.00px;top:402px;font-size:16.6px;line-height:19px;color:#000;left:399px;">1 day</span>
<div class="b" style="left:504px;top:398px;width:106px;height:26px;overflow:hidden;">
<span class="t" style="transform:scaleX(1.0502);margin-left:0.00px;top:4px;font-size:16.6px;line-height:19px;color:#000;left:2.4px;">Mon 1/3/00</span>
</div>
<div class="b" style="left:611px;top:398px;width:105px;height:26px;overflow:hidden;">
<span class="t" style="transform:scaleX(1.0502);margin-left:0.00px;top:4px;font-size:16.6px;line-height:19px;color:#000;left:2.7px;">Mon 1/3/00</span>
</div>
<span class="t" style="transform:scaleX(0.9500);margin-left:-4.10px;top:450px;font-size:15.5px;line-height:17px;color:#666;left:51.8px;">4</span>
<svg class="b" style="left:131px;top:452px;" width="20" height="13" viewBox="0 0 20 13"><rect x="0" y="0" width="16.8" height="8" rx="1.3" fill="#4a7ebb"/><path d="M10.5 6.2h6.2v3h-6.2z" fill="#fff"/><path d="M11 9h6" fill="none" stroke="#6e6e6e" stroke-width="2"/><path d="M14.4 6.2l3.8 2.8-3.8 2.8" fill="none" stroke="#6e6e6e" stroke-width="1.9" stroke-linejoin="round"/></svg>
<span class="t" style="transform:scaleX(1.0063);margin-left:0.00px;top:450px;font-size:16.6px;line-height:19px;color:#000;left:266px;">Identify available</span>
<span class="t" style="transform:scaleX(0.9294);margin-left:0.00px;top:472px;font-size:16.6px;line-height:19px;color:#000;left:266px;">skills,</span>
<span class="t" style="transform:scaleX(1.0263);margin-left:0.00px;top:494px;font-size:16.6px;line-height:19px;color:#000;left:266px;">information and</span>
<span class="t" style="transform:scaleX(0.9989);margin-left:0.00px;top:516px;font-size:16.6px;line-height:19px;color:#000;left:266px;">support</span>
<span class="t" style="transform:scaleX(0.9410);margin-left:0.00px;top:450px;font-size:16.6px;line-height:19px;color:#000;left:399px;">1 day</span>
<div class="b" style="left:504px;top:446px;width:106px;height:26px;overflow:hidden;">
<span class="t" style="transform:scaleX(1.0186);margin-left:0.00px;top:4px;font-size:16.6px;line-height:19px;color:#000;left:2.4px;">Tue 1/4/00</span>
</div>
<div class="b" style="left:611px;top:446px;width:105px;height:26px;overflow:hidden;">
<span class="t" style="transform:scaleX(1.0186);margin-left:0.00px;top:4px;font-size:16.6px;line-height:19px;color:#000;left:2.7px;">Tue 1/4/00</span>
</div>
<span class="t" style="transform:scaleX(0.9500);margin-left:-4.10px;top:544px;font-size:15.5px;line-height:17px;color:#666;left:51.8px;">5</span>
<svg class="b" style="left:131px;top:546px;" width="20" height="13" viewBox="0 0 20 13"><rect x="0" y="0" width="16.8" height="8" rx="1.3" fill="#4a7ebb"/><path d="M10.5 6.2h6.2v3h-6.2z" fill="#fff"/><path d="M11 9h6" fill="none" stroke="#6e6e6e" stroke-width="2"/><path d="M14.4 6.2l3.8 2.8-3.8 2.8" fill="none" stroke="#6e6e6e" stroke-width="1.9" stroke-linejoin="round"/></svg>
<span class="t" style="transform:scaleX(0.9921);margin-left:0.00px;top:544px;font-size:16.6px;line-height:19px;color:#000;left:266px;">Decide whether</span>
<span class="t" style="transform:scaleX(1.0099);margin-left:0.00px;top:566px;font-size:16.6px;line-height:19px;color:#000;left:266px;">to proceed</span>
<span class="t" style="transform:scaleX(0.9410);margin-left:0.00px;top:544px;font-size:16.6px;line-height:19px;color:#000;left:399px;">1 day</span>
<div class="b" style="left:504px;top:540px;width:106px;height:26px;overflow:hidden;">
<span class="t" style="transform:scaleX(1.0251);margin-left:0.00px;top:4px;font-size:16.6px;line-height:19px;color:#000;left:2.4px;">Wed 1/5/00</span>
</div>
<div class="b" style="left:611px;top:540px;width:105px;height:26px;overflow:hidden;">
<span class="t" style="transform:scaleX(1.0251);margin-left:0.00px;top:4px;font-size:16.6px;line-height:19px;color:#000;left:2.7px;">Wed 1/5/00</span>
</div>
<span class="t" style="transform:scaleX(0.9500);margin-left:-4.10px;top:592px;font-size:15.5px;line-height:17px;color:#666;left:51.8px;">6</span>
<svg class="b" style="left:131px;top:594px;" width="20" height="13" viewBox="0 0 20 13"><rect x="0" y="0" width="16.8" height="8" rx="1.3" fill="#4a7ebb"/><path d="M10.5 6.2h6.2v3h-6.2z" fill="#fff"/><path d="M11 9h6" fill="none" stroke="#6e6e6e" stroke-width="2"/><path d="M14.4 6.2l3.8 2.8-3.8 2.8" fill="none" stroke="#6e6e6e" stroke-width="1.9" stroke-linejoin="round"/></svg>
<span class="t" style="transform:scaleX(0.9649);margin-left:0.00px;top:592px;font-size:16.6px;line-height:19px;color:#000;font-weight:700;left:250px;">Define the</span>
<span class="t" style="transform:scaleX(0.9743);margin-left:0.00px;top:614px;font-size:16.6px;line-height:19px;color:#000;font-weight:700;left:250px;">Opportunity</span>
<svg class="b" style="left:237.2px;top:596.1px;" width="8" height="8" viewBox="0 0 8 8"><path d="M6.6 0.2v6.2h-6.4z" fill="#333"/></svg>
<span class="t" style="transform:scaleX(0.9180);margin-left:0.00px;top:592px;font-size:16.6px;line-height:19px;color:#000;font-weight:700;left:399px;">10 days</span>
<div class="b" style="left:504px;top:588px;width:106px;height:26px;overflow:hidden;">
<span class="t" style="transform:scaleX(1.0338);margin-left:0.00px;top:4px;font-size:16.6px;line-height:19px;color:#000;font-weight:700;left:2.4px;">Thu 1/6/00</span>
</div>
<div class="b" style="left:611px;top:588px;width:105px;height:26px;overflow:hidden;">
<span class="t" style="transform:scaleX(1.0485);margin-left:0.00px;top:4px;font-size:16.6px;line-height:19px;color:#000;font-weight:700;left:2.7px;">Wed 1/19/00</span>
</div>
<span class="t" style="transform:scaleX(0.9500);margin-left:-4.10px;top:640px;font-size:15.5px;line-height:17px;color:#666;left:51.8px;">7</span>
<svg class="b" style="left:131px;top:642px;" width="20" height="13" viewBox="0 0 20 13"><rect x="0" y="0" width="16.8" height="8" rx="1.3" fill="#4a7ebb"/><path d="M10.5 6.2h6.2v3h-6.2z" fill="#fff"/><path d="M11 9h6" fill="none" stroke="#6e6e6e" stroke-width="2"/><path d="M14.4 6.2l3.8 2.8-3.8 2.8" fill="none" stroke="#6e6e6e" stroke-width="1.9" stroke-linejoin="round"/></svg>
<span class="t" style="transform:scaleX(0.9554);margin-left:0.00px;top:640px;font-size:16.6px;line-height:19px;color:#000;left:266px;">Research the</span>
<span class="t" style="transform:scaleX(0.9902);margin-left:0.00px;top:662px;font-size:16.6px;line-height:19px;color:#000;left:266px;">market and</span>
<span class="t" style="transform:scaleX(1.0370);margin-left:0.00px;top:684px;font-size:16.6px;line-height:19px;color:#000;left:266px;">competition</span>
<span class="t" style="transform:scaleX(0.9410);margin-left:0.00px;top:640px;font-size:16.6px;line-height:19px;color:#000;left:399px;">1 day</span>
<div class="b" style="left:504px;top:636px;width:106px;height:26px;overflow:hidden;">
<span class="t" style="transform:scaleX(1.0045);margin-left:0.00px;top:4px;font-size:16.6px;line-height:19px;color:#000;left:2.4px;">Thu 1/6/00</span>
</div>
<div class="b" style="left:611px;top:636px;width:105px;height:26px;overflow:hidden;">
<span class="t" style="transform:scaleX(1.0045);margin-left:0.00px;top:4px;font-size:16.6px;line-height:19px;color:#000;left:2.7px;">Thu 1/6/00</span>
</div>
<span class="t" style="transform:scaleX(0.9500);margin-left:-4.10px;top:711px;font-size:15.5px;line-height:17px;color:#666;left:51.8px;">8</span>
<svg class="b" style="left:131px;top:713px;" width="20" height="13" viewBox="0 0 20 13"><rect x="0" y="0" width="16.8" height="8" rx="1.3" fill="#4a7ebb"/><path d="M10.5 6.2h6.2v3h-6.2z" fill="#fff"/><path d="M11 9h6" fill="none" stroke="#6e6e6e" stroke-width="2"/><path d="M14.4 6.2l3.8 2.8-3.8 2.8" fill="none" stroke="#6e6e6e" stroke-width="1.9" stroke-linejoin="round"/></svg>
<span class="t" style="transform:scaleX(1.0135);margin-left:0.00px;top:711px;font-size:16.6px;line-height:19px;color:#000;left:266px;">Interview owners</span>
<span class="t" style="transform:scaleX(1.0152);margin-left:0.00px;top:733px;font-size:16.6px;line-height:19px;color:#000;left:266px;">of similar</span>
<span class="t" style="transform:scaleX(0.9201);margin-left:0.00px;top:755px;font-size:16.6px;line-height:19px;color:#000;left:266px;">businesses</span>
<span class="t" style="transform:scaleX(0.9143);margin-left:0.00px;top:711px;font-size:16.6px;line-height:19px;color:#000;left:399px;">5 days</span>
<div class="b" style="left:504px;top:707px;width:106px;height:26px;overflow:hidden;">
<span class="t" style="transform:scaleX(1.0056);margin-left:0.00px;top:4px;font-size:16.6px;line-height:19px;color:#000;left:2.4px;">Fri 1/7/00</span>
</div>
<div class="b" style="left:611px;top:707px;width:105px;height:26px;overflow:hidden;">
<span class="t" style="transform:scaleX(1.0036);margin-left:0.00px;top:4px;font-size:16.6px;line-height:19px;color:#000;left:2.7px;">Thu 1/13/00</span>
</div>
<span class="t" style="transform:scaleX(0.9500);margin-left:-4.10px;top:805px;font-size:15.5px;line-height:17px;color:#666;left:51.8px;">9</span>
<svg class="b" style="left:131px;top:807px;" width="20" height="13" viewBox="0 0 20 13"><rect x="0" y="0" width="16.8" height="8" rx="1.3" fill="#4a7ebb"/><path d="M10.5 6.2h6.2v3h-6.2z" fill="#fff"/><path d="M11 9h6" fill="none" stroke="#6e6e6e" stroke-width="2"/><path d="M14.4 6.2l3.8 2.8-3.8 2.8" fill="none" stroke="#6e6e6e" stroke-width="1.9" stroke-linejoin="round"/></svg>
<span class="t" style="transform:scaleX(0.9957);margin-left:0.00px;top:805px;font-size:16.6px;line-height:19px;color:#000;left:266px;">Identify needed</span>
<span class="t" style="transform:scaleX(0.9635);margin-left:0.00px;top:827px;font-size:16.6px;line-height:19px;color:#000;left:266px;">resources</span>
<span class="t" style="transform:scaleX(0.9163);margin-left:0.00px;top:805px;font-size:16.6px;line-height:19px;color:#000;left:399px;">2 days</span>
<div class="b" style="left:504px;top:801px;width:106px;height:26px;overflow:hidden;">
<span class="t" style="transform:scaleX(1.0047);margin-left:0.00px;top:4px;font-size:16.6px;line-height:19px;color:#000;left:2.4px;">Fri 1/14/00</span>
</div>
<div class="b" style="left:611px;top:801px;width:105px;height:26px;overflow:hidden;">
<span class="t" style="transform:scaleX(1.0394);margin-left:0.00px;top:4px;font-size:16.6px;line-height:19px;color:#000;left:2.7px;">Mon 1/17/00</span>
</div>
<span class="t" style="transform:scaleX(0.9500);margin-left:-8.19px;top:853px;font-size:15.5px;line-height:17px;color:#666;left:51.8px;">10</span>
<svg class="b" style="left:131px;top:855px;" width="20" height="13" viewBox="0 0 20 13"><rect x="0" y="0" width="16.8" height="8" rx="1.3" fill="#4a7ebb"/><path d="M10.5 6.2h6.2v3h-6.2z" fill="#fff"/><path d="M11 9h6" fill="none" stroke="#6e6e6e" stroke-width="2"/><path d="M14.4 6.2l3.8 2.8-3.8 2.8" fill="none" stroke="#6e6e6e" stroke-width="1.9" stroke-linejoin="round"/></svg>
<span class="t" style="transform:scaleX(1.0371);margin-left:0.00px;top:853px;font-size:16.6px;line-height:19px;color:#000;left:266px;">Identify</span>
<span class="t" style="transform:scaleX(1.0014);margin-left:0.00px;top:875px;font-size:16.6px;line-height:19px;color:#000;left:266px;">operating cost</span>
<span class="t" style="transform:scaleX(0.9830);margin-left:0.00px;top:897px;font-size:16.6px;line-height:19px;color:#000;left:266px;">elements</span>
<span class="t" style="transform:scaleX(0.9163);margin-left:0.00px;top:853px;font-size:16.6px;line-height:19px;color:#000;left:399px;">2 days</span>
<div class="b" style="left:504px;top:849px;width:106px;height:26px;overflow:hidden;">
<span class="t" style="transform:scaleX(1.0130);margin-left:0.00px;top:4px;font-size:16.6px;line-height:19px;color:#000;left:2.4px;">Tue 1/18/00</span>
</div>
<div class="b" style="left:611px;top:849px;width:105px;height:26px;overflow:hidden;">
<span class="t" style="transform:scaleX(1.0235);margin-left:0.00px;top:4px;font-size:16.6px;line-height:19px;color:#000;left:2.7px;">Wed 1/19/00</span>
</div>
<span class="t" style="transform:scaleX(0.9500);margin-left:-7.64px;top:925px;font-size:15.5px;line-height:17px;color:#666;left:51.8px;">11</span>
<svg class="b" style="left:131px;top:926px;" width="20" height="13" viewBox="0 0 20 13"><rect x="0" y="0" width="16.8" height="8" rx="1.3" fill="#4a7ebb"/><path d="M10.5 6.2h6.2v3h-6.2z" fill="#fff"/><path d="M11 9h6" fill="none" stroke="#6e6e6e" stroke-width="2"/><path d="M14.4 6.2l3.8 2.8-3.8 2.8" fill="none" stroke="#6e6e6e" stroke-width="1.9" stroke-linejoin="round"/></svg>
<span class="t" style="transform:scaleX(0.9021);margin-left:0.00px;top:924px;font-size:16.6px;line-height:19px;color:#000;font-weight:700;left:250px;">Evaluate Business</span>
<span class="t" style="transform:scaleX(0.9425);margin-left:0.00px;top:946px;font-size:16.6px;line-height:19px;color:#000;font-weight:700;left:250px;">Approach</span>
<svg class="b" style="left:237.2px;top:928.6px;" width="8" height="8" viewBox="0 0 8 8"><path d="M6.6 0.2v6.2h-6.4z" fill="#333"/></svg>
<span class="t" style="transform:scaleX(0.9096);margin-left:0.00px;top:924px;font-size:16.6px;line-height:19px;color:#000;font-weight:700;left:399px;">4 days</span>
<div class="b" style="left:504px;top:920px;width:106px;height:26px;overflow:hidden;">
<span class="t" style="transform:scaleX(1.0311);margin-left:0.00px;top:4px;font-size:16.6px;line-height:19px;color:#000;font-weight:700;left:2.4px;">Thu 1/20/00</span>
</div>
<div class="b" style="left:611px;top:920px;width:105px;height:26px;overflow:hidden;">
<span class="t" style="transform:scaleX(1.0470);margin-left:0.00px;top:4px;font-size:16.6px;line-height:19px;color:#000;font-weight:700;left:2.7px;">Tue 1/25/00</span>
</div>
<span class="t" style="transform:scaleX(0.9500);margin-left:-8.19px;top:972px;font-size:15.5px;line-height:17px;color:#666;left:51.8px;">12</span>
<svg class="b" style="left:131px;top:974px;" width="20" height="13" viewBox="0 0 20 13"><rect x="0" y="0" width="16.8" height="8" rx="1.3" fill="#4a7ebb"/><path d="M10.5 6.2h6.2v3h-6.2z" fill="#fff"/><path d="M11 9h6" fill="none" stroke="#6e6e6e" stroke-width="2"/><path d="M14.4 6.2l3.8 2.8-3.8 2.8" fill="none" stroke="#6e6e6e" stroke-width="1.9" stroke-linejoin="round"/></svg>
<span class="t" style="transform:scaleX(0.9912);margin-left:0.00px;top:972px;font-size:16.6px;line-height:19px;color:#000;left:266px;">Define new</span>
<span class="t" style="transform:scaleX(1.0486);margin-left:0.00px;top:994px;font-size:16.6px;line-height:19px;color:#000;left:266px;">entity</span>
<span class="t" style="transform:scaleX(0.9923);margin-left:0.00px;top:1016px;font-size:16.6px;line-height:19px;color:#000;left:266px;">requirements</span>
<span class="t" style="transform:scaleX(0.9410);margin-left:0.00px;top:972px;font-size:16.6px;line-height:19px;color:#000;left:399px;">1 day</span>
<div class="b" style="left:504px;top:968px;width:106px;height:26px;overflow:hidden;">
<span class="t" style="transform:scaleX(1.0048);margin-left:0.00px;top:4px;font-size:16.6px;line-height:19px;color:#000;left:2.4px;">Thu 1/20/00</span>
</div>
<div class="b" style="left:611px;top:968px;width:105px;height:26px;overflow:hidden;">
<span class="t" style="transform:scaleX(1.0048);margin-left:0.00px;top:4px;font-size:16.6px;line-height:19px;color:#000;left:2.7px;">Thu 1/20/00</span>
</div>
<div class="b " style="left:726px;top:250px;width:945px;height:45px;background:#e6e6e6;"></div>
<div class="b " style="left:726px;top:294px;width:945px;height:1px;background:#b4b4b4;"></div>
<div class="b " style="left:845px;top:295px;width:49px;height:742px;background:#f7f7f7;"></div>
<div class="b " style="left:869px;top:295px;width:1px;height:742px;background:#fbfbfb;"></div>
<div class="b " style="left:1013px;top:295px;width:49px;height:742px;background:#f7f7f7;"></div>
<div class="b " style="left:1037px;top:295px;width:1px;height:742px;background:#fbfbfb;"></div>
<div class="b " style="left:1181px;top:295px;width:49px;height:742px;background:#f7f7f7;"></div>
<div class="b " style="left:1205px;top:295px;width:1px;height:742px;background:#fbfbfb;"></div>
<div class="b " style="left:1349px;top:295px;width:49px;height:742px;background:#f7f7f7;"></div>
<div class="b " style="left:1373px;top:295px;width:1px;height:742px;background:#fbfbfb;"></div>
<div class="b " style="left:1517px;top:295px;width:49px;height:742px;background:#f7f7f7;"></div>
<div class="b " style="left:1541px;top:295px;width:1px;height:742px;background:#fbfbfb;"></div>
<div class="b " style="left:726px;top:322px;width:945px;height:1px;background:#6e6e6e;"></div>
<span class="t" style="transform:scaleX(0.9691);margin-left:0.00px;top:254px;font-size:13.3px;line-height:15px;color:#5c5c5c;left:731px;">2, '00</span>
<div class="b " style="left:869px;top:255px;width:1px;height:39px;background:#c8c8c8;"></div>
<span class="t" style="transform:scaleX(0.9400);margin-left:0.00px;top:254px;font-size:13.3px;line-height:15px;color:#5c5c5c;left:875px;">Jan 9, '00</span>
<div class="b " style="left:1037px;top:255px;width:1px;height:39px;background:#c8c8c8;"></div>
<span class="t" style="transform:scaleX(0.9435);margin-left:0.00px;top:254px;font-size:13.3px;line-height:15px;color:#5c5c5c;left:1043px;">Jan 16, '00</span>
<div class="b " style="left:1205px;top:255px;width:1px;height:39px;background:#c8c8c8;"></div>
<span class="t" style="transform:scaleX(0.9435);margin-left:0.00px;top:254px;font-size:13.3px;line-height:15px;color:#5c5c5c;left:1211px;">Jan 23, '00</span>
<div class="b " style="left:1373px;top:255px;width:1px;height:39px;background:#c8c8c8;"></div>
<span class="t" style="transform:scaleX(0.9435);margin-left:0.00px;top:254px;font-size:13.3px;line-height:15px;color:#5c5c5c;left:1379px;">Jan 30, '00</span>
<div class="b " style="left:1541px;top:255px;width:1px;height:39px;background:#c8c8c8;"></div>
<span class="t" style="transform:scaleX(0.9541);margin-left:0.00px;top:254px;font-size:13.3px;line-height:15px;color:#5c5c5c;left:1547px;">Feb 6, '00</span>
<span class="t" style="transform:scaleX(1.0760);margin-left:-6.51px;top:273px;font-size:14.5px;line-height:16px;color:#737373;left:738px;">M</span>
<div class="b " style="left:749px;top:274px;width:1px;height:20px;background:#d0d0d0;"></div>
<span class="t" style="transform:scaleX(0.8575);margin-left:-3.80px;top:273px;font-size:14.5px;line-height:16px;color:#737373;left:762px;">T</span>
<div class="b " style="left:773px;top:274px;width:1px;height:20px;background:#d0d0d0;"></div>
<span class="t" style="transform:scaleX(0.9766);margin-left:-6.68px;top:273px;font-size:14.5px;line-height:16px;color:#737373;left:786px;">W</span>
<div class="b " style="left:797px;top:274px;width:1px;height:20px;background:#d0d0d0;"></div>
<span class="t" style="transform:scaleX(0.8575);margin-left:-3.80px;top:273px;font-size:14.5px;line-height:16px;color:#737373;left:810px;">T</span>
<div class="b " style="left:821px;top:274px;width:1px;height:20px;background:#d0d0d0;"></div>
<span class="t" style="transform:scaleX(0.7984);margin-left:-3.54px;top:273px;font-size:14.5px;line-height:16px;color:#737373;left:834px;">F</span>
<div class="b " style="left:845px;top:274px;width:1px;height:20px;background:#d0d0d0;"></div>
<span class="t" style="transform:scaleX(0.7957);margin-left:-3.85px;top:273px;font-size:14.5px;line-height:16px;color:#737373;left:858px;">S</span>
<span class="t" style="transform:scaleX(0.7957);margin-left:-3.85px;top:273px;font-size:14.5px;line-height:16px;color:#737373;left:882px;">S</span>
<div class="b " style="left:893px;top:274px;width:1px;height:20px;background:#d0d0d0;"></div>
<span class="t" style="transform:scaleX(1.0760);margin-left:-6.51px;top:273px;font-size:14.5px;line-height:16px;color:#737373;left:906px;">M</span>
<div class="b " style="left:917px;top:274px;width:1px;height:20px;background:#d0d0d0;"></div>
<span class="t" style="transform:scaleX(0.8575);margin-left:-3.80px;top:273px;font-size:14.5px;line-height:16px;color:#737373;left:930px;">T</span>
<div class="b " style="left:941px;top:274px;width:1px;height:20px;background:#d0d0d0;"></div>
<span class="t" style="transform:scaleX(0.9766);margin-left:-6.68px;top:273px;font-size:14.5px;line-height:16px;color:#737373;left:954px;">W</span>
<div class="b " style="left:965px;top:274px;width:1px;height:20px;background:#d0d0d0;"></div>
<span class="t" style="transform:scaleX(0.8575);margin-left:-3.80px;top:273px;font-size:14.5px;line-height:16px;color:#737373;left:978px;">T</span>
<div class="b " style="left:989px;top:274px;width:1px;height:20px;background:#d0d0d0;"></div>
<span class="t" style="transform:scaleX(0.7984);margin-left:-3.54px;top:273px;font-size:14.5px;line-height:16px;color:#737373;left:1002px;">F</span>
<div class="b " style="left:1013px;top:274px;width:1px;height:20px;background:#d0d0d0;"></div>
<span class="t" style="transform:scaleX(0.7957);margin-left:-3.85px;top:273px;font-size:14.5px;line-height:16px;color:#737373;left:1026px;">S</span>
<span class="t" style="transform:scaleX(0.7957);margin-left:-3.85px;top:273px;font-size:14.5px;line-height:16px;color:#737373;left:1050px;">S</span>
<div class="b " style="left:1061px;top:274px;width:1px;height:20px;background:#d0d0d0;"></div>
<span class="t" style="transform:scaleX(1.0760);margin-left:-6.51px;top:273px;font-size:14.5px;line-height:16px;color:#737373;left:1074px;">M</span>
<div class="b " style="left:1085px;top:274px;width:1px;height:20px;background:#d0d0d0;"></div>
<span class="t" style="transform:scaleX(0.8575);margin-left:-3.80px;top:273px;font-size:14.5px;line-height:16px;color:#737373;left:1098px;">T</span>
<div class="b " style="left:1109px;top:274px;width:1px;height:20px;background:#d0d0d0;"></div>
<span class="t" style="transform:scaleX(0.9766);margin-left:-6.68px;top:273px;font-size:14.5px;line-height:16px;color:#737373;left:1122px;">W</span>
<div class="b " style="left:1133px;top:274px;width:1px;height:20px;background:#d0d0d0;"></div>
<span class="t" style="transform:scaleX(0.8575);margin-left:-3.80px;top:273px;font-size:14.5px;line-height:16px;color:#737373;left:1146px;">T</span>
<div class="b " style="left:1157px;top:274px;width:1px;height:20px;background:#d0d0d0;"></div>
<span class="t" style="transform:scaleX(0.7984);margin-left:-3.54px;top:273px;font-size:14.5px;line-height:16px;color:#737373;left:1170px;">F</span>
<div class="b " style="left:1181px;top:274px;width:1px;height:20px;background:#d0d0d0;"></div>
<span class="t" style="transform:scaleX(0.7957);margin-left:-3.85px;top:273px;font-size:14.5px;line-height:16px;color:#737373;left:1194px;">S</span>
<span class="t" style="transform:scaleX(0.7957);margin-left:-3.85px;top:273px;font-size:14.5px;line-height:16px;color:#737373;left:1218px;">S</span>
<div class="b " style="left:1229px;top:274px;width:1px;height:20px;background:#d0d0d0;"></div>
<span class="t" style="transform:scaleX(1.0760);margin-left:-6.51px;top:273px;font-size:14.5px;line-height:16px;color:#737373;left:1242px;">M</span>
<div class="b " style="left:1253px;top:274px;width:1px;height:20px;background:#d0d0d0;"></div>
<span class="t" style="transform:scaleX(0.8575);margin-left:-3.80px;top:273px;font-size:14.5px;line-height:16px;color:#737373;left:1266px;">T</span>
<div class="b " style="left:1277px;top:274px;width:1px;height:20px;background:#d0d0d0;"></div>
<span class="t" style="transform:scaleX(0.9766);margin-left:-6.68px;top:273px;font-size:14.5px;line-height:16px;color:#737373;left:1290px;">W</span>
<div class="b " style="left:1301px;top:274px;width:1px;height:20px;background:#d0d0d0;"></div>
<span class="t" style="transform:scaleX(0.8575);margin-left:-3.80px;top:273px;font-size:14.5px;line-height:16px;color:#737373;left:1314px;">T</span>
<div class="b " style="left:1325px;top:274px;width:1px;height:20px;background:#d0d0d0;"></div>
<span class="t" style="transform:scaleX(0.7984);margin-left:-3.54px;top:273px;font-size:14.5px;line-height:16px;color:#737373;left:1338px;">F</span>
<div class="b " style="left:1349px;top:274px;width:1px;height:20px;background:#d0d0d0;"></div>
<span class="t" style="transform:scaleX(0.7957);margin-left:-3.85px;top:273px;font-size:14.5px;line-height:16px;color:#737373;left:1362px;">S</span>
<span class="t" style="transform:scaleX(0.7957);margin-left:-3.85px;top:273px;font-size:14.5px;line-height:16px;color:#737373;left:1386px;">S</span>
<div class="b " style="left:1397px;top:274px;width:1px;height:20px;background:#d0d0d0;"></div>
<span class="t" style="transform:scaleX(1.0760);margin-left:-6.51px;top:273px;font-size:14.5px;line-height:16px;color:#737373;left:1410px;">M</span>
<div class="b " style="left:1421px;top:274px;width:1px;height:20px;background:#d0d0d0;"></div>
<span class="t" style="transform:scaleX(0.8575);margin-left:-3.80px;top:273px;font-size:14.5px;line-height:16px;color:#737373;left:1434px;">T</span>
<div class="b " style="left:1445px;top:274px;width:1px;height:20px;background:#d0d0d0;"></div>
<span class="t" style="transform:scaleX(0.9766);margin-left:-6.68px;top:273px;font-size:14.5px;line-height:16px;color:#737373;left:1458px;">W</span>
<div class="b " style="left:1469px;top:274px;width:1px;height:20px;background:#d0d0d0;"></div>
<span class="t" style="transform:scaleX(0.8575);margin-left:-3.80px;top:273px;font-size:14.5px;line-height:16px;color:#737373;left:1482px;">T</span>
<div class="b " style="left:1493px;top:274px;width:1px;height:20px;background:#d0d0d0;"></div>
<span class="t" style="transform:scaleX(0.7984);margin-left:-3.54px;top:273px;font-size:14.5px;line-height:16px;color:#737373;left:1506px;">F</span>
<div class="b " style="left:1517px;top:274px;width:1px;height:20px;background:#d0d0d0;"></div>
<span class="t" style="transform:scaleX(0.7957);margin-left:-3.85px;top:273px;font-size:14.5px;line-height:16px;color:#737373;left:1530px;">S</span>
<span class="t" style="transform:scaleX(0.7957);margin-left:-3.85px;top:273px;font-size:14.5px;line-height:16px;color:#737373;left:1554px;">S</span>
<div class="b " style="left:1565px;top:274px;width:1px;height:20px;background:#d0d0d0;"></div>
<span class="t" style="transform:scaleX(1.0760);margin-left:-6.51px;top:273px;font-size:14.5px;line-height:16px;color:#737373;left:1578px;">M</span>
<div class="b " style="left:1589px;top:274px;width:1px;height:20px;background:#d0d0d0;"></div>
<span class="t" style="transform:scaleX(0.8575);margin-left:-3.80px;top:273px;font-size:14.5px;line-height:16px;color:#737373;left:1602px;">T</span>
<div class="b " style="left:1613px;top:274px;width:1px;height:20px;background:#d0d0d0;"></div>
<span class="t" style="transform:scaleX(0.9766);margin-left:-6.68px;top:273px;font-size:14.5px;line-height:16px;color:#737373;left:1626px;">W</span>
<div class="b " style="left:1637px;top:274px;width:1px;height:20px;background:#d0d0d0;"></div>
<span class="t" style="transform:scaleX(0.8575);margin-left:-3.80px;top:273px;font-size:14.5px;line-height:16px;color:#737373;left:1650px;">T</span>
<div class="b " style="left:1661px;top:274px;width:1px;height:20px;background:#d0d0d0;"></div>
<span class="t" style="transform:scaleX(0.7984);margin-left:-3.54px;top:273px;font-size:14.5px;line-height:16px;color:#737373;left:1674px;">F</span>
<div class="b " style="left:726px;top:303px;width:975px;height:2px;background:#b0b0b0;"></div>
<div class="b " style="left:726px;top:303px;width:1px;height:11px;background:#b0b0b0;"></div>
<div class="b " style="left:726px;top:331px;width:745px;height:2px;background:#4d4d4d;"></div>
<div class="b " style="left:726px;top:331px;width:1px;height:11px;background:#4d4d4d;"></div>
<div class="b " style="left:1468px;top:331px;width:3px;height:11px;background:#4d4d4d;"></div>
<div class="b " style="left:726px;top:379px;width:73px;height:2px;background:#4d4d4d;"></div>
<div class="b " style="left:726px;top:379px;width:1px;height:11px;background:#4d4d4d;"></div>
<div class="b " style="left:796px;top:379px;width:3px;height:11px;background:#4d4d4d;"></div>
<div class="b " style="left:796px;top:597px;width:339px;height:2px;background:#4d4d4d;"></div>
<div class="b " style="left:796px;top:597px;width:3px;height:11px;background:#4d4d4d;"></div>
<div class="b " style="left:1132px;top:597px;width:3px;height:11px;background:#4d4d4d;"></div>
<div class="b " style="left:1132px;top:930px;width:147px;height:2px;background:#4d4d4d;"></div>
<div class="b " style="left:1132px;top:930px;width:3px;height:11px;background:#4d4d4d;"></div>
<div class="b " style="left:1276px;top:930px;width:3px;height:11px;background:#4d4d4d;"></div>
<div class="b " style="left:726px;top:407px;width:24px;height:11px;background:#8ab9e9;"></div>
<span class="t" style="transform:scaleX(1.0300);margin-left:0.00px;top:399px;font-size:16.6px;line-height:19px;color:#000;font-weight:700;left:757px;">Manager</span>
<div class="b " style="left:750px;top:455px;width:24px;height:11px;background:#8ab9e9;"></div>
<span class="t" style="transform:scaleX(0.9806);margin-left:0.00px;top:447px;font-size:16.6px;line-height:19px;color:#000;font-weight:700;left:781px;">Business Advisor,Manager</span>
<div class="b " style="left:774px;top:549px;width:24px;height:11px;background:#8ab9e9;"></div>
<span class="t" style="transform:scaleX(1.0300);margin-left:0.00px;top:541px;font-size:16.6px;line-height:19px;color:#000;font-weight:700;left:805px;">Manager</span>
<div class="b " style="left:798px;top:645px;width:24px;height:11px;background:#8ab9e9;"></div>
<span class="t" style="transform:scaleX(0.9429);margin-left:0.00px;top:637px;font-size:16.6px;line-height:19px;color:#000;font-weight:700;left:829px;">Business Advisor</span>
<div class="b " style="left:822px;top:716px;width:168px;height:11px;background:#8ab9e9;"></div>
<span class="t" style="transform:scaleX(0.9856);margin-left:0.00px;top:708px;font-size:16.6px;line-height:19px;color:#000;font-weight:700;left:997px;">Owners</span>
<div class="b " style="left:990px;top:810px;width:96px;height:11px;background:#8ab9e9;"></div>
<span class="t" style="transform:scaleX(0.9487);margin-left:0.00px;top:802px;font-size:16.6px;line-height:19px;color:#000;font-weight:700;left:1093px;">Business Advisor,Peers</span>
<div class="b " style="left:1086px;top:858px;width:48px;height:11px;background:#8ab9e9;"></div>
<span class="t" style="transform:scaleX(0.9894);margin-left:0.00px;top:850px;font-size:16.6px;line-height:19px;color:#000;font-weight:700;left:1141px;">Accountant</span>
<div class="b " style="left:1134px;top:977px;width:24px;height:11px;background:#8ab9e9;"></div>
<span class="t" style="transform:scaleX(1.0300);margin-left:0.00px;top:969px;font-size:16.6px;line-height:19px;color:#000;font-weight:700;left:1165px;">Manager</span>
<svg class="b" style="left:748px;top:411px;" width="12" height="45" viewBox="0 0 12 45"><path d="M2 1.5h1q2.5 0 2.5 2.5V40" fill="none" stroke="#2b77d2" stroke-width="1"/><path d="M1 39h9l-4.5 5z" fill="#2b77d2"/></svg>
<svg class="b" style="left:772px;top:459px;" width="12" height="91" viewBox="0 0 12 91"><path d="M2 1.5h1q2.5 0 2.5 2.5V86" fill="none" stroke="#2b77d2" stroke-width="1"/><path d="M1 85h9l-4.5 5z" fill="#2b77d2"/></svg>
<svg class="b" style="left:796px;top:553px;" width="12" height="93" viewBox="0 0 12 93"><path d="M2 1.5h1q2.5 0 2.5 2.5V88" fill="none" stroke="#2b77d2" stroke-width="1"/><path d="M1 87h9l-4.5 5z" fill="#2b77d2"/></svg>
<svg class="b" style="left:820px;top:649px;" width="12" height="68" viewBox="0 0 12 68"><path d="M2 1.5h1q2.5 0 2.5 2.5V63" fill="none" stroke="#2b77d2" stroke-width="1"/><path d="M1 62h9l-4.5 5z" fill="#2b77d2"/></svg>
<svg class="b" style="left:988px;top:720px;" width="12" height="91" viewBox="0 0 12 91"><path d="M2 1.5h1q2.5 0 2.5 2.5V86" fill="none" stroke="#2b77d2" stroke-width="1"/><path d="M1 85h9l-4.5 5z" fill="#2b77d2"/></svg>
<svg class="b" style="left:1084px;top:814px;" width="12" height="45" viewBox="0 0 12 45"><path d="M2 1.5h1q2.5 0 2.5 2.5V40" fill="none" stroke="#2b77d2" stroke-width="1"/><path d="M1 39h9l-4.5 5z" fill="#2b77d2"/></svg>
<svg class="b" style="left:1132px;top:862px;" width="12" height="116" viewBox="0 0 12 116"><path d="M2 1.5h1q2.5 0 2.5 2.5V111" fill="none" stroke="#2b77d2" stroke-width="1"/><path d="M1 110h9l-4.5 5z" fill="#2b77d2"/></svg>
<svg class="b" style="left:1156px;top:981px;" width="12" height="65" viewBox="0 0 12 65"><path d="M2 1.5h1q2.5 0 2.5 2.5V60" fill="none" stroke="#2b77d2" stroke-width="1"/><path d="M1 59h9l-4.5 5z" fill="#2b77d2"/></svg>
</body></html>
